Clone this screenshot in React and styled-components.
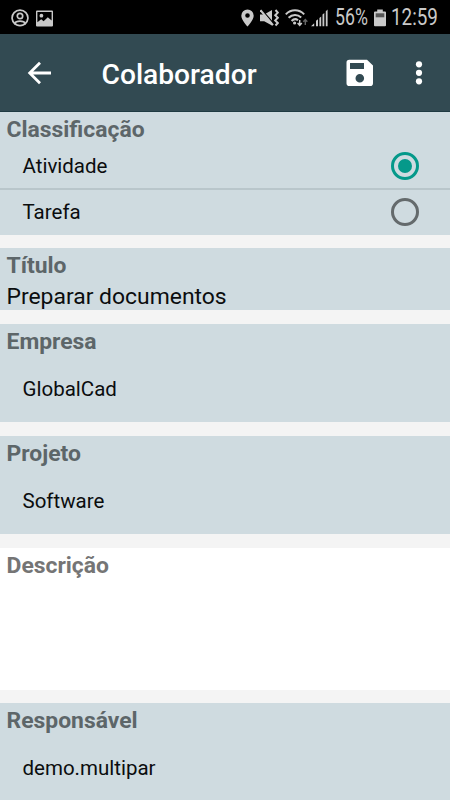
import { useState } from 'react';
import styled, { createGlobalStyle } from 'styled-components';

const GlobalStyle = createGlobalStyle`
  * {
    box-sizing: border-box;
  }

  body {
    margin: 0;
    background-color: #f4f4f4;
    font-family: Roboto, 'Liberation Sans', sans-serif;
  }
`;

// Container principal da tela
const Screen = styled.div`
  display: flex;
  flex-direction: column;
  width: 450px;
  height: 800px;
  overflow: hidden;
  background-color: #f4f4f4;
`;

// Barra de status do sistema
const StatusBar = styled.div`
  display: flex;
  flex: none;
  align-items: center;
  height: 34px;
  padding: 2px 13px 0 11px;
  background-color: #000;
  color: #c9c9c9;

  svg {
    display: block;
    flex: none;
  }
`;

const StatusGroup = styled.div`
  display: flex;
  align-items: center;
  gap: ${(props) => props.$gap || '6px'};
  margin-left: ${(props) => (props.$end ? 'auto' : '0')};
`;

// Texto condensado da barra de status
const StatusText = styled.span`
  display: block;
  width: ${(props) => props.$width};
  font-size: 23px;
  line-height: 26px;
  white-space: nowrap;

  span {
    display: inline-block;
    transform: scaleX(${(props) => props.$scale});
    transform-origin: left center;
  }
`;

// Barra de ferramentas
const Toolbar = styled.header`
  display: flex;
  flex: none;
  align-items: center;
  height: 78px;
  padding: 1px 14px 0 25px;
  background-color: #324a52;
  border-bottom: 1px solid #1f3a42;
  color: #fff;
`;

const Title = styled.h1`
  flex: 1;
  margin: 0 0 0 46.5px;
  padding-top: 3px;
  font-size: 28.2px;
  font-weight: 500;
  line-height: 34px;
`;

const IconButton = styled.button`
  display: flex;
  padding: 0;
  border: none;
  background: none;
  color: inherit;
  margin-left: ${(props) => props.$space || '0'};
`;

// Lista de campos do formulário
const Form = styled.main`
  display: flex;
  flex-direction: column;
`;

const Section = styled.section`
  flex: none;
  height: ${(props) => props.$height};
  margin-bottom: ${(props) => props.$after || '14px'};
  padding-top: 4px;
  background-color: ${(props) => (props.$blank ? '#fff' : '#cfdbe0')};
`;

const Label = styled.h2`
  margin: 0;
  padding-left: 6.5px;
  color: ${(props) => (props.$blank ? '#757575' : '#5d6669')};
  font-size: 22.9px;
  font-weight: 700;
  line-height: 27px;
`;

const Option = styled.label`
  display: flex;
  align-items: center;
  justify-content: space-between;
  height: ${(props) => props.$height};
  padding: 0 31px 0 22.5px;
  border-bottom: ${(props) => (props.$divided ? '2px solid #b9c6cb' : 'none')};
  color: #0b0d0e;
  font-size: 20.5px;
`;

const Radio = styled.input`
  appearance: none;
  display: grid;
  place-items: center;
  width: 28px;
  height: 28px;
  margin: 0;
  border: 3px solid #646a6c;
  border-radius: 50%;

  &:checked {
    border-color: #05998a;
  }

  &:checked::before {
    content: '';
    width: 14px;
    height: 14px;
    border-radius: 50%;
    background-color: #05998a;
  }
`;

const TextValue = styled.div`
  padding: 4px 0 0 6.5px;
  color: #0b0d0e;
  font-size: 22.9px;
  line-height: 27px;
`;

const SelectValue = styled.div`
  padding: 22px 0 0 22.5px;
  color: #0b0d0e;
  font-size: 20.5px;
  line-height: 25px;
`;

const PersonIcon = () => (
  <svg width="18" height="18" viewBox="0 0 18 18" fill="none" stroke="currentColor" strokeWidth="1.7">
    <path d="M4.2 15.2A7.9 7.9 0 1 1 13.8 15.2" />
    <circle cx="9" cy="7" r="2.7" />
    <path d="M3.8 14.2C5 11.3 13 11.3 14.2 14.2C12 17.4 6 17.4 3.8 14.2Z" />
  </svg>
);

const PictureIcon = () => (
  <svg width="17" height="17" viewBox="0 0 17 17">
    <path
      fill="currentColor"
      fillRule="evenodd"
      d="M1 0.5H16Q17 0.5 17 1.5V15.5Q17 16.5 16 16.5H1Q0 16.5 0 15.5V1.5Q0 0.5 1 0.5ZM1.4 1.9V12.3L5.2 9.3L7.6 11.2L11.8 7.2L15.6 10.4V1.9Z"
    />
    <circle cx="5.4" cy="5.7" r="1.9" fill="currentColor" />
  </svg>
);

const PinIcon = () => (
  <svg width="13" height="18" viewBox="0 0 13 18">
    <path
      fill="currentColor"
      fillRule="evenodd"
      d="M6.5 0.5A6.2 6.2 0 0 0 0.3 6.7C0.3 11 6.5 17.5 6.5 17.5S12.7 11 12.7 6.7A6.2 6.2 0 0 0 6.5 0.5ZM6.5 4.2A2.3 2.3 0 1 1 6.5 8.8A2.3 2.3 0 0 1 6.5 4.2Z"
    />
  </svg>
);

const MutedIcon = () => (
  <svg width="19" height="18" viewBox="0 0 19 18">
    <path fill="currentColor" d="M0 5.5H4.2L12 1V16.5L4.2 12.2H0Z" />
    <path d="M1.5 0.5L14 15" stroke="#000" strokeWidth="1.4" />
    <path d="M0.5 1.2L13 16.2" stroke="currentColor" strokeWidth="2" />
    <path d="M15.5 1L17.8 3.6L15.2 6.2L17.8 8.8L15.2 11.4L17.8 14L15.5 16.5" fill="none" stroke="currentColor" strokeWidth="2" />
  </svg>
);

const WifiIcon = () => (
  <svg width="23" height="18" viewBox="0 0 23 18" fill="none" stroke="currentColor" strokeWidth="2">
    <path d="M0.8 5.4C6 0 14 0 19.2 5.4M3.6 8.8C7.3 5.2 12.6 5.2 16.2 8.6M6.6 12C8.6 9.9 11.3 9.9 13 11.3" />
    <circle cx="9.6" cy="14" r="1.6" fill="currentColor" stroke="none" />
    <path d="M14.7 11V16M12.6 14L14.7 16.3L16.8 14" strokeWidth="1.5" />
    <path d="M20.3 16V11M18.3 12.8L20.3 10.6L22.3 12.8" stroke="#666" strokeWidth="1.4" />
  </svg>
);

const SignalIcon = () => (
  <svg width="17" height="18" viewBox="0 0 17 18" fill="currentColor">
    <path d="M0 17.3L3.2 14.3V17.3ZM5 11.8L7 10.3V17.3H5ZM8.4 9L10.2 7.4V17.3H8.4ZM11.5 5.5L13.3 3.9V17.3H11.5ZM14.8 2.2L16.6 0.5V17.3H14.8Z" />
  </svg>
);

const BatteryIcon = () => (
  <svg width="12" height="18" viewBox="0 0 12 18">
    <path d="M3.2 0.5H8.8V2.5H11Q12 2.5 12 3.5V16.3Q12 17.3 11 17.3H1Q0 17.3 0 16.3V3.5Q0 2.5 1 2.5H3.2Z" fill="currentColor" />
    <path d="M1.7 4.3H10.3V8.3H1.7Z" fill="#555" />
  </svg>
);

const BackIcon = () => (
  <svg width="30" height="30" viewBox="0 0 30 30" fill="none" stroke="#fff" strokeWidth="2.8">
    <path d="M26 15H5M15 4.7L4.7 15L15 25.3" />
  </svg>
);

const SaveIcon = () => (
  <svg width="28" height="28" viewBox="0 0 28 28">
    <path
      fill="#fff"
      fillRule="evenodd"
      d="M3.3 0.7H21L27 6.6V24.2Q27 27 24.2 27H3.3Q0.5 27 0.5 24.2V3.5Q0.5 0.7 3.3 0.7ZM4 4V10H18V4ZM13.8 14.9A4.3 4.3 0 1 0 13.8 23.5A4.3 4.3 0 1 0 13.8 14.9Z"
    />
  </svg>
);

const MoreIcon = () => (
  <svg width="34" height="34" viewBox="0 0 34 34" fill="#fff">
    <circle cx="17" cy="8.3" r="3.1" />
    <circle cx="17" cy="16.8" r="3.1" />
    <circle cx="17" cy="25.3" r="3.1" />
  </svg>
);

const options = ['Atividade', 'Tarefa'];

const App = () => {
  const [selected, setSelected] = useState('Atividade');

  return (
    <Screen>
      <GlobalStyle />
      <StatusBar>
        <StatusGroup $gap="7px">
          <PersonIcon />
          <PictureIcon />
        </StatusGroup>
        <StatusGroup $end $gap="3px">
          <StatusGroup>
            <PinIcon />
            <MutedIcon />
            <WifiIcon />
          </StatusGroup>
          <StatusGroup>
            <StatusGroup $gap="7px">
              <SignalIcon />
              <StatusText $width="33px" $scale={0.77}><span>56%</span></StatusText>
            </StatusGroup>
            <StatusGroup $gap="5px">
              <BatteryIcon />
              <StatusText $width="46px" $scale={0.82}><span>12:59</span></StatusText>
            </StatusGroup>
          </StatusGroup>
        </StatusGroup>
      </StatusBar>

      <Toolbar>
        <IconButton aria-label="Voltar"><BackIcon /></IconButton>
        <Title>Colaborador</Title>
        <IconButton aria-label="Salvar"><SaveIcon /></IconButton>
        <IconButton aria-label="Mais opções" $space="28px"><MoreIcon /></IconButton>
      </Toolbar>

      <Form>
        <Section $height="123px" $after="13px">
          <Label>Classificação</Label>
          {/* Opções de classificação */}
          {options.map((option, index) => (
            <Option key={option} $height={index === 0 ? '47px' : '44px'} $divided={index === 0}>
              {option}
              <Radio
                type="radio"
                name="classificacao"
                checked={selected === option}
                onChange={() => setSelected(option)}
              />
            </Option>
          ))}
        </Section>

        <Section $height="62px">
          <Label>Título</Label>
          <TextValue>Preparar documentos</TextValue>
        </Section>

        <Section $height="98px">
          <Label>Empresa</Label>
          <SelectValue>GlobalCad</SelectValue>
        </Section>

        <Section $height="98px">
          <Label>Projeto</Label>
          <SelectValue>Software</SelectValue>
        </Section>

        <Section $height="142px" $after="13px" $blank>
          <Label $blank>Descrição</Label>
        </Section>

        <Section $height="98px">
          <Label>Responsável</Label>
          <SelectValue>demo.multipar</SelectValue>
        </Section>
      </Form>
    </Screen>
  );
};

export default App;
